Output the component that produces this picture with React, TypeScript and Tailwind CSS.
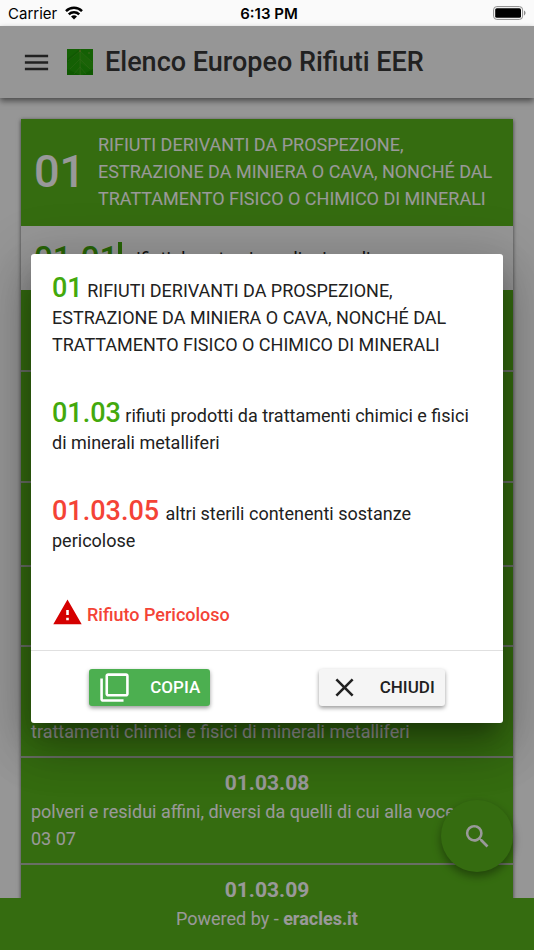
import { useState } from 'react';
import { MdClose, MdFilterNone, MdMenu, MdSearch, MdWarning } from 'react-icons/md';

type WasteItem = {
    code: string;
    description: string;
    dangerous?: boolean;
}

const chapter = {
    code: "01",
    description: "RIFIUTI DERIVANTI DA PROSPEZIONE, ESTRAZIONE DA MINIERA O CAVA, NONCHÉ DAL TRATTAMENTO FISICO O CHIMICO DI MINERALI",
};

const items: WasteItem[] = [
    { code: "01.03.04", description: "sterili che possono generare acido prodotti dalla lavorazione di minerale solforoso", dangerous: true },
    { code: "01.03.05", description: "altri sterili contenenti sostanze pericolose", dangerous: true },
    { code: "01.03.06", description: "sterili diversi da quelli di cui alle voci 01 03 04 e 01 03 05" },
    { code: "01.03.07", description: "altri rifiuti contenenti sostanze pericolose, prodotti da trattamenti chimici e fisici di minerali metalliferi", dangerous: true },
    { code: "01.03.08", description: "polveri e residui affini, diversi da quelli di cui alla voce 01 03 07" },
    { code: "01.03.09", description: "fanghi rossi derivanti dalla produzione di allumina" },
];

function StatusBar() {
    return <div className="relative flex h-[26px] shrink-0 items-center justify-between bg-[#fafafa] pl-2 pr-[7px] font-[Inter,sans-serif] text-[15px] text-black">
        <div className="flex items-center gap-2">
            <span>Carrier</span>
            <svg className="h-[14px] w-[18px]" viewBox="0 0 18 14" fill="none" stroke="currentColor" strokeWidth="2.5">
                <path d="M1 5.1a11.4 11.4 0 0 1 16 0" />
                <path d="M3.8 8.3a7.4 7.4 0 0 1 10.4 0" />
                <path d="M9 13.5 6 10.6a4.4 4.4 0 0 1 6 0z" fill="currentColor" stroke="none" />
            </svg>
        </div>
        <span className="absolute inset-x-0 pl-1 text-center font-semibold">6:13 PM</span>
        <svg className="h-[14px] w-[34px]" viewBox="0 0 34 14">
            <rect x="0.6" y="0.6" width="29" height="12.8" rx="3.2" fill="none" stroke="#8a8a8a" />
            <rect x="2.2" y="2.2" width="25.8" height="9.6" rx="1.6" />
            <path d="M31 4.6c2 .8 2 4 0 4.8z" fill="#8a8a8a" />
        </svg>
    </div>
}

function LeafLogo() {
    return <svg className="size-[26px]" viewBox="0 0 26 26">
        <rect width="26" height="26" fill="#22a008" />
        <path d="M13 2 26 14v8L13 14z" fill="#2ca60c" />
        <path d="M13 2 0 14v-4L13 0z" fill="#1c9404" />
        <path d="M0 20 13 26H0zM26 20v6H15z" fill="#189300" />
        <g fill="none" stroke="#5fae30" strokeWidth="0.6" strokeOpacity="0.7">
            <path d="M13 2 1 12M13 2l12 11M13 10 3 20M13 10l10 10M13 18l-6 7M13 18l6 7" />
            <path d="M13 0l.2 26" strokeWidth="0.8" />
        </g>
        <circle cx="13" cy="2" r="0.8" fill="#a8963a" />
        <circle cx="22" cy="4" r="0.7" fill="#8fb04a" />
    </svg>
}

function Header() {
    return <header className="relative z-10 flex h-[72px] shrink-0 items-center bg-[#fafafa] pl-[21px] text-[#383838] shadow-[0_3px_6px_rgba(0,0,0,0.5)]">
        <button aria-label="Menu"><MdMenu className="size-[31px]" /></button>
        <div className="ml-[15px]"><LeafLogo /></div>
        <h1 className="ml-3 text-[27px] font-medium whitespace-nowrap">Elenco Europeo Rifiuti EER</h1>
    </header>
}

function ItemRow({ item }: { item: WasteItem }) {
    return <li className={`border-b-2 border-[#b0b8a8] px-[10px] pb-[11px] text-white ${item.dangerous ? "pt-[15px]" : "pt-[11px]"}`}>
        <h3 className="text-center text-[21px] leading-[29px] font-bold">{item.code}</h3>
        <p>{item.description}</p>
    </li>
}

function WasteList() {
    return <main className="min-h-0 flex-1 overflow-hidden px-[21px] pt-[21px]">
        <section className="bg-[#59b51b] shadow-[0_1px_4px_rgba(0,0,0,0.6)]">
            <div className="flex items-center pt-3 pr-3 pb-[14px] pl-[13px] text-white">
                <h2 className="w-16 shrink-0 text-[45px] leading-none font-medium">{chapter.code}</h2>
                <p>{chapter.description}</p>
            </div>
            <div className="flex h-16 items-center gap-2 bg-[#fafafa] pl-[13px]">
                <h2 className="border-r-4 border-[#43a90c] text-[33px] leading-none font-medium text-[#43a90c]">01.01</h2>
                <p>rifiuti da estrazione di minerali</p>
            </div>
            <div className="flex h-[82px] items-center gap-2 border-b-2 border-[#b0b8a8] pl-[13px] text-white">
                <h2 className="text-[33px] leading-none font-medium">01.03</h2>
                <p>rifiuti prodotti da trattamenti chimici e fisici di minerali metalliferi</p>
            </div>
            <ul>
                {items.map(item => <ItemRow key={item.code} item={item} />)}
            </ul>
        </section>
    </main>
}

function WasteDialog({ onClose }: { onClose: () => void }) {
    return <div className="absolute inset-0 z-30 flex items-center bg-black/40 px-[31px]">
        <div role="dialog" aria-modal="true" className="w-full rounded-[3px] bg-white shadow-[0_14px_20px_-8px_rgba(0,0,0,0.3),0_28px_44px_4px_rgba(0,0,0,0.18),0_10px_54px_10px_rgba(0,0,0,0.16)]">
            <div className="flex flex-col gap-[42px] px-[21px] pt-[21px] pb-[22px]">
                <p><span className="text-[27px] font-medium text-[#43a90c]">{chapter.code}</span> {chapter.description}</p>
                <p><span className="text-[27px] font-medium text-[#43a90c]">01.03</span> rifiuti prodotti da trattamenti chimici e fisici di minerali metalliferi</p>
                <p><span className="mr-[2px] text-[27px] font-medium text-[#f44336]">01.03.05</span> altri sterili contenenti sostanze pericolose</p>
                <p className="flex items-end gap-1 pt-px font-medium text-[#f44336]">
                    <MdWarning className="size-[31px] text-[#d50000]" />
                    Rifiuto Pericoloso
                </p>
            </div>
            <div className="flex items-center justify-around border-t border-[#e0e0e0] px-1 pt-[18px] pb-[17px] text-[17px] font-medium">
                <button className="flex h-[37px] items-center gap-5 rounded-[3px] bg-[#4caf50] px-[10px] text-white shadow-[0_2px_4px_rgba(0,0,0,0.4)]">
                    <MdFilterNone className="size-[31px]" />
                    COPIA
                </button>
                <button onClick={onClose} className="flex h-[37px] items-center gap-5 rounded-[3px] bg-[#f5f5f5] px-[10px] shadow-[0_2px_4px_rgba(0,0,0,0.4)]">
                    <MdClose className="size-[31px]" />
                    CHIUDI
                </button>
            </div>
        </div>
    </div>
}

function App() {
    const [open, setOpen] = useState(true);

    return <div className="flex h-dvh flex-col overflow-hidden bg-[#fafafa] font-[Roboto,sans-serif] text-[18px] leading-[27px] text-[#212121]">
        <StatusBar />
        <div className="relative flex min-h-0 flex-1 flex-col">
            <Header />
            <WasteList />
            <footer className="h-[52px] shrink-0 bg-[#59b51b] pt-[7px] text-center text-white">
                Powered by - <a href="#" className="font-bold">eracles.it</a>
            </footer>
            <button aria-label="Cerca" className="absolute right-[21px] bottom-[78px] z-20 flex size-[72px] items-center justify-center rounded-full bg-[#59b51b] text-white shadow-[0_4px_10px_rgba(0,0,0,0.4)]">
                <MdSearch className="size-[31px]" />
            </button>
            {open && <WasteDialog onClose={() => setOpen(false)} />}
        </div>
    </div>
}

export default App;
